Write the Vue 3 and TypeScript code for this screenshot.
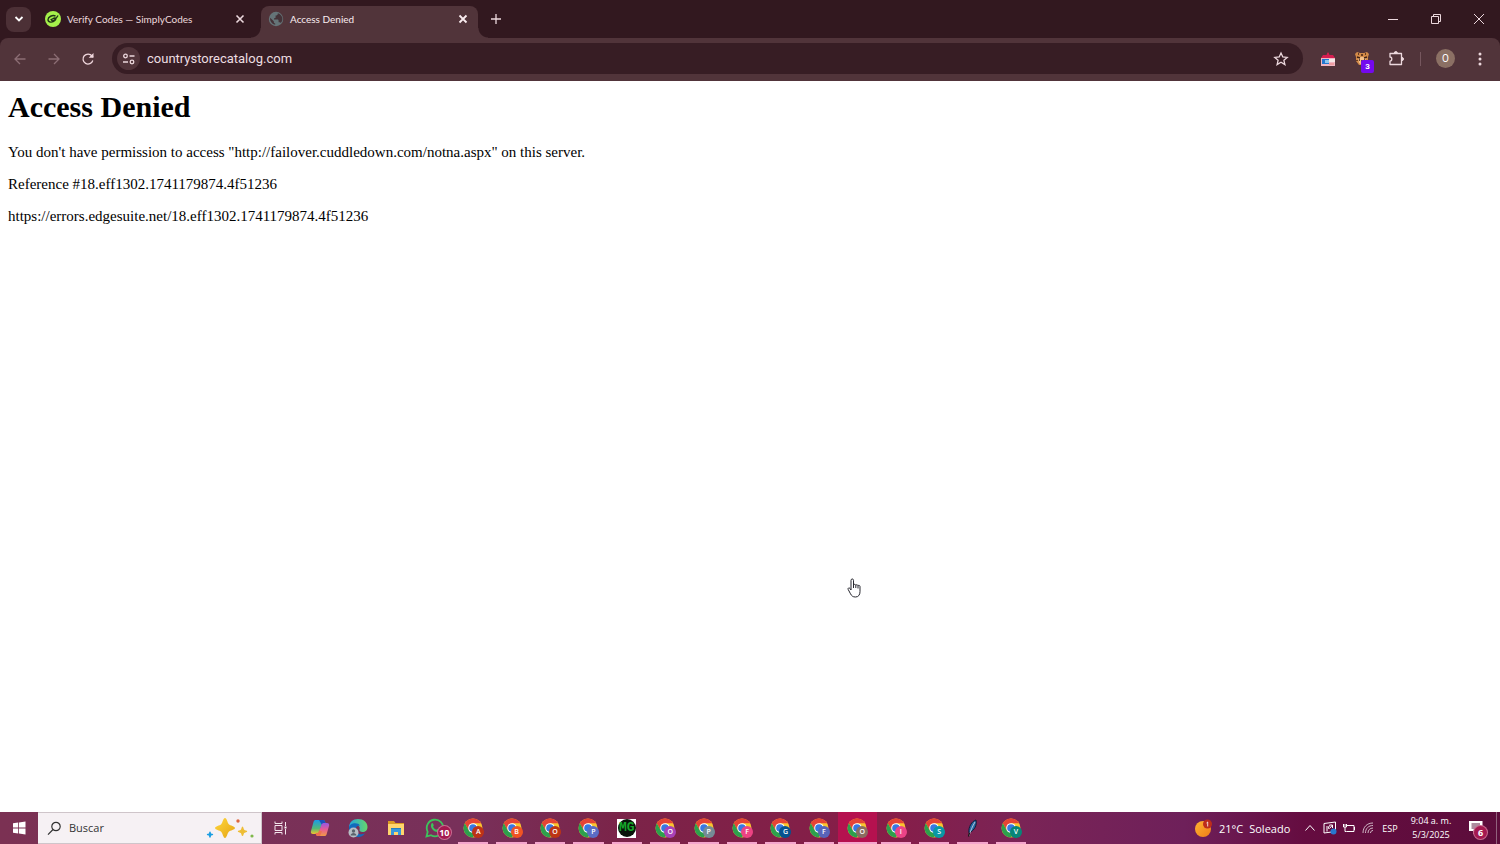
<script setup lang="ts">
import { ref } from 'vue'

interface TaskApp {
  kind: 'taskview' | 'copilot' | 'edge' | 'files' | 'whatsapp' | 'chrome' | 'mg' | 'feather'
  name: string
  letter?: string
  color?: string
  running?: boolean
  active?: boolean
}

const chrome = (letter: string, color: string, active = false): TaskApp => ({
  kind: 'chrome', name: `Google Chrome (${letter})`, letter, color, running: true, active,
})

const apps: TaskApp[] = [
  { kind: 'taskview', name: 'Vista de tareas' },
  { kind: 'copilot', name: 'Copilot' },
  { kind: 'edge', name: 'Microsoft Edge' },
  { kind: 'files', name: 'Explorador de archivos' },
  { kind: 'whatsapp', name: 'WhatsApp' },
  chrome('A', '#bd3217'),
  chrome('B', '#f05423'),
  chrome('O', '#bd3514'),
  chrome('P', '#5a6cc4'),
  { kind: 'mg', name: 'MG', running: true },
  chrome('O', '#a841b8'),
  chrome('P', '#758b96'),
  chrome('F', '#ed4383'),
  chrome('G', '#05528f'),
  chrome('F', '#5864b8'),
  chrome('O', '#8a6c60', true),
  chrome('I', '#ec4388'),
  chrome('S', '#0998a5'),
  { kind: 'feather', name: 'Pluma', running: true },
  chrome('V', '#078578'),
]

const address = ref('countrystorecatalog.com')
const query = ref('')
</script>

<template>
  <div class="screen">
    <header class="browser">
      <div class="strip">
        <button class="tab-search" aria-label="Buscar pestañas">
          <svg width="10" height="8" viewBox="0 0 10 8"><path d="M1.5 2 5 5.5 8.5 2" class="line bold" /></svg>
        </button>
        <div class="tab">
          <svg width="16" height="16" viewBox="0 0 16 16">
            <circle cx="8" cy="8" r="8" fill="#a5f04b" />
            <path d="M10.5 5C7.500 3.600 3 5.800 3 8.800c0 2.600 4.600 3.200 6.800.8 1.200-1.300 1.400-2.600.2-2.600S7.500 8 6.200 8.600l1 1.300c2 0 4.200-2.700 5.800-5.400" fill="none" stroke="#203317" stroke-width="1.400" />
          </svg>
          <span class="title">Verify Codes — SimplyCodes</span>
          <button class="close" aria-label="Cerrar pestaña">
            <svg width="10" height="10" viewBox="0 0 10 10"><path d="m1.500 1.500 7 7m0-7-7 7" class="line" /></svg>
          </button>
        </div>
        <div class="tab current">
          <svg width="16" height="16" viewBox="0 0 16 16">
            <circle cx="8" cy="8" r="7.200" fill="#657478" />
            <path d="M9.800 2.200C10 3.800 9 4.600 7.600 4.600v1.600c0 .8-.6 1-1.600 1v1.300h3.400c.8 0 1.200.5 1.200 1.300v1.500h1c.6 0 1 .3 1.200.8A6 6 0 0 0 9.800 2.200zM2.200 6.800a6 6 0 0 0 5 7v-1.400c-.8 0-1.400-.6-1.400-1.400v-.8z" fill="#443238" />
          </svg>
          <span class="title">Access Denied</span>
          <button class="close" aria-label="Cerrar pestaña">
            <svg width="10" height="10" viewBox="0 0 10 10"><path d="m1.500 1.500 7 7m0-7-7 7" class="line bold" /></svg>
          </button>
        </div>
        <button class="new-tab" aria-label="Nueva pestaña">
          <svg width="12" height="12" viewBox="0 0 12 12"><path d="M6 1v10M1 6h10" class="line small" /></svg>
        </button>
        <div class="window-buttons">
          <button aria-label="Minimizar"><svg width="12" height="12" viewBox="0 0 12 12"><path d="M1 6.500h10" class="line thin" /></svg></button>
          <button aria-label="Restaurar"><svg width="12" height="12" viewBox="0 0 12 12"><path d="M1.500 3.500h7v7h-7zM3.500 3.500v-2h7v7h-2" class="line thin" /></svg></button>
          <button aria-label="Cerrar"><svg width="12" height="12" viewBox="0 0 12 12"><path d="m1 1 10 10M11 1 1 11" class="line thin" /></svg></button>
        </div>
      </div>

      <div class="toolbar">
        <button class="nav dim" aria-label="Atrás"><svg width="14" height="14" viewBox="0 0 14 14"><path d="M12.500 7H2M7 2 2 7l5 5" class="line small" /></svg></button>
        <button class="nav dim" aria-label="Adelante"><svg width="14" height="14" viewBox="0 0 14 14"><path d="M1.500 7H12M7 2l5 5-5 5" class="line small" /></svg></button>
        <button class="nav" aria-label="Volver a cargar">
          <svg width="14" height="14" viewBox="0 0 14 14"><path d="M11.800 8.500A5 5 0 1 1 11 4l1 1.200" class="line small" /><path d="M12.500 1v4.800H7.700z" fill="currentColor" /></svg>
        </button>
        <div class="omnibox">
          <button class="site" aria-label="Información del sitio">
            <svg width="14" height="12" viewBox="0 0 14 12"><circle cx="3.500" cy="3" r="1.800" class="line small" /><path d="M7.500 3h5M1 9h5" class="line small" /><circle cx="10" cy="9" r="1.800" class="line small" /></svg>
          </button>
          <input v-model="address" class="url" type="text" aria-label="Dirección" spellcheck="false" />
          <button class="star" aria-label="Agregar a favoritos">
            <svg width="16" height="16" viewBox="0 0 16 16"><path d="m8 2 1.800 4 4.400.4-3.300 2.900 1 4.300L8 11.300l-3.900 2.300 1-4.300-3.300-2.900L6.200 6z" class="line small" /></svg>
          </button>
        </div>
        <button class="ext" aria-label="Extensión de tienda">
          <svg width="16" height="16" viewBox="0 0 16 16">
            <path d="M1 7 3 4h3.500l1-2.500h1l1 2.500H13l2 3z" fill="#d51e50" />
            <path d="M1 7h14v8H1z" fill="#f1b6c2" /><path d="M2 8h7v5H2z" fill="#2477cf" /><path d="M5 9h4v3H5z" fill="#8cc6ee" /><path d="M9 8h6v3H9z" fill="#f4e9e6" /><path d="M9 12h5v2H9z" fill="#ed9da1" />
          </svg>
        </button>
        <button class="ext" aria-label="Extensión con 3 avisos">
          <svg width="16" height="16" viewBox="0 0 16 16">
            <path d="M1 3 3 1l3 1h4l3-1 2 2-1 3v4l-3 4H5l-3-4V6z" fill="#d28a48" />
            <path d="M4 6h8l-1 6-3 2-3-2z" fill="#f4c18b" />
            <path d="M4 3h1m2 1h2m2-1h1M3 6l3 1m4 0 3-1M5 9h1m4 0h1M7 10h2M3 9v1" stroke="#402014" stroke-width="1.400" />
          </svg>
          <span class="count">3</span>
        </button>
        <button class="ext" aria-label="Extensiones">
          <svg width="18" height="18" viewBox="0 0 18 18"><path d="M3 3.500h11.500v11H3v-3.300c2.400 0 2.400-4.200 0-4.200z" class="line small" stroke-linejoin="round" /><path d="M7.300 3a1.500 1.500 0 0 1 3 0zM15 7.500a1.500 1.500 0 0 1 0 3z" fill="currentColor" stroke="currentColor" /></svg>
        </button>
        <span class="divider"></span>
        <button class="profile" aria-label="Perfil">O</button>
        <button class="menu" aria-label="Menú">
          <svg width="4" height="14" viewBox="0 0 4 14"><circle cx="2" cy="2" r="1.500" /><circle cx="2" cy="7" r="1.500" /><circle cx="2" cy="12" r="1.500" /></svg>
        </button>
      </div>
    </header>

    <main class="page">
      <h1>Access Denied</h1>
      <p>You don't have permission to access "http://failover.cuddledown.com/notna.aspx" on this server.</p>
      <p>Reference #18.eff1302.1741179874.4f51236</p>
      <p>https://errors.edgesuite.net/18.eff1302.1741179874.4f51236</p>
    </main>

    <svg class="pointer" width="14" height="20" viewBox="0 0 14 20">
      <path d="M4 12V2.300C4 .5 6.500.5 6.500 2.300V7c0-1 2.200-1 2.300.4 0-1 2.200-.9 2.200.5.200-.9 2-.7 2 .6v5.200c0 3-1.500 5.300-4.500 5.300-2.800 0-3.900-1.200-5-3.200L1.200 11.500C.5 10 2.200 9.300 3 10.500zM6.500 7v3M8.800 7.400V10M11 8v2.500" fill="#fff" stroke="#26262e" stroke-width="1" stroke-linejoin="round" />
    </svg>

    <footer class="taskbar">
      <button class="start" aria-label="Inicio">
        <svg width="14" height="14" viewBox="0 0 14 14"><path d="m1 2.300 5.200-.7v5H1zM7 1.500 13.500.6v6H7zM1 7.400h5.200v5L1 11.700zM7 7.400h6.500v6L7 12.500z" fill="#fff" /></svg>
      </button>
      <label class="search">
        <svg width="15" height="15" viewBox="0 0 15 15"><circle cx="9" cy="5.500" r="4.200" fill="none" stroke="#333" stroke-width="1.200" /><path d="M6 8.500 1 13.700" stroke="#333" stroke-width="1.200" /></svg>
        <input v-model="query" type="text" placeholder="Buscar" aria-label="Buscar" />
        <svg width="50" height="24" viewBox="0 0 50 24">
          <defs><linearGradient id="gold" x1="0" y1="0" x2="1" y2="1"><stop offset="0" stop-color="#ffd83e" /><stop offset="1" stop-color="#e5a313" /></linearGradient></defs>
          <path d="M20 2c1.800 0 2.400 4.800 3.800 6.200s6.200 2 6.200 3.800-4.800 2.400-6.200 3.800S21.800 22 20 22s-2.400-4.800-3.800-6.200S10 13.800 10 12s4.800-2.400 6.200-3.800S18.200 2 20 2z" fill="url(#gold)" />
          <path d="M37.500 10.500c1 0 1 2.600 1.700 3.300s3 .7 3 1.600-2.300.9-3 1.600-.7 3-1.700 3-1-2.300-1.700-3-3-.7-3-1.600 2.300-.9 3-1.600.7-3.300 1.700-3.300z" fill="#eebd35" />
          <path d="M5 15.500c1 0 .7 1.600 1.200 2s2 .2 2 1.100-1.500.6-2 1.100-.2 2-1.200 2-.7-1.500-1.200-2-2-.2-2-1.100 1.500-.6 2-1.100.2-2 1.200-2z" fill="#1b9ee2" />
          <circle cx="33" cy="5" r="1.700" fill="#df663d" /><circle cx="47" cy="20" r="1.600" fill="#7fb84b" />
        </svg>
      </label>

      <nav class="apps" aria-label="Aplicaciones">
        <button v-for="(app, i) in apps" :key="i" :aria-label="app.name" :class="{ running: app.running, active: app.active }">
          <svg v-if="app.kind === 'taskview'" width="16" height="14" viewBox="0 0 16 14"><path d="M2 .5v2h7v-2M2 13.500v-2h7v2M2 4.500h7v5H2zM12.500 1v4M12.500 8v5.500" fill="none" stroke="#f3e5ec" /><path d="M11.500 5.500h2v2h-2z" fill="#fff" /></svg>
          <svg v-else-if="app.kind === 'copilot'" width="20" height="18" viewBox="0 0 20 18">
            <defs>
              <linearGradient id="cpa" x1="0" y1="0" x2="0" y2="1"><stop offset="0" stop-color="#199be8" /><stop offset=".6" stop-color="#52b879" /><stop offset="1" stop-color="#f0c52c" /></linearGradient>
              <linearGradient id="cpb" x1="0" y1="0" x2="0" y2="1"><stop offset="0" stop-color="#9457e5" /><stop offset=".5" stop-color="#e85c94" /><stop offset="1" stop-color="#f29a44" /></linearGradient>
            </defs>
            <path d="M6 1h7c2 0 2 2 2.500 3L12 5 9 13c-.6 1.500-1.500 2-3 2H3c-2 0-2.500-1.500-2-3L3.500 3C4 1.500 4.500 1 6 1z" fill="url(#cpa)" />
            <path d="M9 1h4c1.500 0 2 1.500 2.400 3L12 6z" fill="#1c50be" />
            <path d="M14.500 17H8c-2 0-2-1.500-2.500-3h3l3-8.500C12 4.500 13 4 14 4h3c2 0 2.500 1.500 2 3l-2.300 8c-.4 1.500-1 2-2.200 2z" fill="url(#cpb)" />
            <path d="m9 12 3 .3-2 4.700H8c-1.800 0-2-1.500-2.500-3H8z" fill="#ef704d" />
          </svg>
          <svg v-else-if="app.kind === 'edge'" width="20" height="20" viewBox="0 0 20 20">
            <defs><linearGradient id="edgeg"><stop offset="0" stop-color="#22a6dc" /><stop offset="1" stop-color="#67d66b" /></linearGradient></defs>
            <path d="M1 10C1 4 5 1 10 1c5.500 0 9.500 3.500 9.500 8 0 3-2 5-5 5-2 0-3.500-1-3-2.500.9-2-.5-4.500-3.500-4.500-4 0-7 1.500-7 3z" fill="url(#edgeg)" />
            <path d="M1 10c0-3 3-4.700 6.200-4.700 2.300 0 4 .8 4.700 2.200C8 7.500 7 11 8.300 13.500c1.400 2.800 5 3.600 8.700 2C15 18 13 19 10 19c-5 0-9-4-9-9z" fill="#126abc" />
            <circle cx="5.500" cy="14.500" r="5" fill="#b6bdc4" /><circle cx="5.500" cy="13" r="1.700" fill="#5b626c" /><path d="M2.500 17.500c.2-3.500 5.800-3.500 6 0" fill="#5b626c" />
          </svg>
          <svg v-else-if="app.kind === 'files'" width="18" height="16" viewBox="0 0 18 16"><path d="M1 1h6l1.500 2H17v12H1z" fill="#dc9c23" /><path d="M1 4h16v11H1z" fill="#ffd66d" /><path d="M4 9h10v6h-3v-3H7v3H4z" fill="#3699dc" /><path d="M4 8h10v1H4z" fill="#267fbc" /></svg>
          <template v-else-if="app.kind === 'whatsapp'">
            <svg width="20" height="20" viewBox="0 0 20 20"><path d="m1.500 18.500 1.200-4.700A8.300 8.300 0 1 1 6 17.200z" fill="none" stroke="#3cc45c" stroke-width="1.800" /><path d="M6.500 5.500c1-1 1.500-.3 2.200 1.500.3.900-.8 1.300-.5 1.900.7 1.300 1.700 2.200 3 2.800.6.300 1.100-1.200 1.800-.9 2.100.9 2 1.200 1.500 2.200-3 3.500-11-3-8-7.500z" fill="#3cc45c" /></svg>
            <span class="notice far">10</span>
          </template>
          <template v-else-if="app.kind === 'chrome'">
            <svg width="20" height="20" viewBox="0 0 20 20">
              <circle cx="10" cy="10" r="9.500" fill="#f9c52f" />
              <path d="M1.800 5.200A9.500 9.500 0 0 1 18.200 5.200H10L5.800 12.400z" fill="#e54335" />
              <path d="M1.800 5.200 5.800 12.400 10 14.800h4L9.500 19.500A9.500 9.500 0 0 1 1.800 5.200z" fill="#2da04d" />
              <circle cx="10" cy="10" r="4.800" fill="#fff" /><circle cx="10" cy="10" r="3.800" fill="#3778e2" />
            </svg>
            <span class="letter" :style="{ background: app.color }">{{ app.letter }}</span>
          </template>
          <span v-else-if="app.kind === 'mg'" class="mg"><span>MG</span></span>
          <svg v-else width="12" height="18" viewBox="0 0 12 18"><path d="M2 14C1 8 5 2 9 1c1 5-1 10-7 13z" fill="#2869a5" stroke="#101a38" /><path d="M8 3C5.500 7 3.500 12 2 17" fill="none" stroke="#d3ddea" stroke-width=".8" /><path d="m2.500 14-1 3.500" stroke="#111" stroke-width="1.200" /></svg>
        </button>
      </nav>

      <div class="tray">
        <button class="weather">
          <svg width="18" height="18" viewBox="0 0 18 18"><defs><linearGradient id="sun" x1="0" y1="0" x2="1" y2="1"><stop offset="0" stop-color="#ffb331" /><stop offset="1" stop-color="#ef7d18" /></linearGradient></defs><circle cx="8" cy="10" r="8" fill="url(#sun)" /><circle cx="12.500" cy="5" r="4.500" fill="#bd2c1c" /><path d="m11.500 4 1.200-1v4.500" fill="none" stroke="#fff" stroke-width=".8" /></svg>
          <span>21°C</span><span>Soleado</span>
        </button>
        <button aria-label="Mostrar iconos ocultos"><svg width="12" height="12" viewBox="0 0 12 12"><path d="m1.500 8.500 4.500-5 4.500 5" class="line thin" /></svg></button>
        <button aria-label="Sincronización"><svg width="14" height="14" viewBox="0 0 14 14"><path d="M1 2.500 12.500 1v9.500L1 12zM4 5v5.500M7 4.500c-1.500.5-2 2.500-1 3.500M6.500 4h3v3M9.500 4 6.500 7.500" class="line thin" /><circle cx="10.500" cy="10.500" r="3" fill="#2877cf" /></svg></button>
        <button aria-label="Batería"><svg width="14" height="12" viewBox="0 0 14 12"><path d="M4.500 3.500h7.500v6H4.500M12.500 5v3M1.500 2v3h3V2M1 3h4M3 5v4.500h1.500" class="line thin" /></svg></button>
        <button aria-label="Red"><svg width="12" height="12" viewBox="0 0 12 12" opacity=".7"><path d="M1 11C1 5 5 1 11 1M3.500 11C3.500 6.500 6.500 3.500 11 3.500M6 11c0-3 2-5 5-5M8.500 11c0-1.500 1-2.500 2.500-2.500" class="line thin" /></svg></button>
        <button class="lang">ESP</button>
        <button class="clock"><span>9:04 a. m.</span><span>5/3/2025</span></button>
        <button class="center" aria-label="6 notificaciones">
          <svg width="14" height="14" viewBox="0 0 14 14"><path d="M0 0h13.500v10H7l-3 3v-3H0z" fill="#fff" /><path d="M2.500 3h8.500M2.500 5h8.500M2.500 7h5" stroke="#5d183f" /></svg>
          <span class="notice">6</span>
        </button>
        <span class="peek"></span>
      </div>
    </footer>
  </div>
</template>

<style>
html, body { margin: 0; background: #fff; }
</style>

<style scoped>
.screen { min-height: 100vh; display: flex; flex-direction: column; position: relative; font-family: "Open Sans", "Noto Sans", sans-serif; }
button, input { font: inherit; color: inherit; background: none; border: 0; padding: 0; margin: 0; outline: none; }
button { display: flex; align-items: center; justify-content: center; position: relative; flex-shrink: 0; }
svg { display: block; flex-shrink: 0; }
.line { fill: none; stroke: currentColor; stroke-width: 1.6; }
.line.bold { stroke-width: 1.8; }
.line.small { stroke-width: 1.3; }
.line.thin { stroke-width: 1; }

.browser { background: #32181f; color: #ecd8dd; font-family: Roboto, "Open Sans", sans-serif; }
.strip { height: 38px; display: flex; align-items: center; padding-left: 6px; }
.tab-search { width: 25px; height: 25px; border-radius: 8px; background: #4c3036; color: #fff; }
.tab { width: 217px; height: 32px; margin-top: 6px; box-sizing: border-box; display: flex; align-items: center; gap: 6px; padding: 0 8px 6px 7px; font-family: Lato, "Open Sans", sans-serif; font-size: 10px; line-height: 16px; position: relative; }
.tab:not(.current) { margin: 6px 6px 0 7px; }
.tab.current { background: #51343a; border-radius: 8px 8px 0 0; color: #faedf0; }
.tab.current::before, .tab.current::after { content: ""; position: absolute; bottom: 0; width: 10px; height: 10px; }
.tab.current::before { left: -10px; background: radial-gradient(circle at 0 0, transparent 9px, #51343a 10px); }
.tab.current::after { right: -10px; background: radial-gradient(circle at 100% 0, transparent 9px, #51343a 10px); }
.title { flex: 1; white-space: nowrap; }
.close { width: 14px; height: 14px; }
.new-tab { width: 24px; height: 24px; margin-left: 6px; }
.window-buttons { margin-left: auto; display: flex; }
.window-buttons button { width: 43px; height: 36px; }

.toolbar { height: 43px; box-sizing: border-box; display: flex; align-items: center; padding: 0 10px 2px 3px; background: #51343a; border-radius: 8px 8px 0 0; }
.nav { width: 34px; height: 32px; color: #f1d8de; }
.nav.dim { color: #8c6d74; }
.omnibox { flex: 1; height: 31px; margin-left: 7px; border-radius: 16px; background: #371d24; display: flex; align-items: center; padding: 0 14px 0 5px; }
.site { width: 23px; height: 23px; border-radius: 50%; background: #51343a; }
.url { flex: 1; min-width: 0; margin-left: 7px; font-size: 13px; line-height: 20px; color: #eddde1; }
.ext { width: 34px; height: 32px; }
.omnibox + .ext { margin-left: 8px; }
.count { position: absolute; left: 16px; top: 17px; width: 13px; height: 13px; border-radius: 2px; background: #7409ee; color: #fff; font-size: 8px; font-weight: 700; line-height: 13px; text-align: center; }
.divider { width: 1px; height: 14px; margin: 0 15px 0 7px; background: #76575e; }
.profile { width: 19px; height: 19px; border-radius: 50%; background: #8b7064; color: #fff; font-size: 10px; }
.menu { width: 20px; height: 24px; margin-left: 15px; fill: currentColor; }

.page { flex: 1; padding: 9px 8px 8px; font-family: "Liberation Serif", "Times New Roman", serif; font-size: 15px; line-height: 17px; color: #000; }
.page h1 { margin: 0 0 20px; font-size: 30px; line-height: 34px; }
.page p { margin: 0 0 15px; }
.pointer { position: absolute; left: 847px; top: 578px; }

.taskbar { height: 32px; display: flex; color: #fff; font-size: 11px; background: linear-gradient(90deg, #7b3153 0, #78305a 31%, #7b2348 42%, #871d48 59%, #7a2456 68%, #6e205a 79%, #650c40 87%, #5c0d3b 100%); }
.start { width: 38px; }
.search { width: 224px; box-sizing: border-box; display: flex; align-items: center; padding: 0 6px 0 9px; background: #f6f1f4; border: 1px solid #cfc5ca; border-left: 0; color: #333; }
.search input { flex: 1; min-width: 0; margin-left: 7px; line-height: 16px; }
.search input::placeholder { color: #333; opacity: 1; }
.apps { display: flex; flex: 0 1 768px; }
.apps button { flex: 1; }
.apps .active { background: #b5114f; }
.running::after { content: ""; position: absolute; left: 4px; right: 4px; bottom: 0; height: 2px; background: #f4a6cd; }
.active::after { left: 0; right: 0; }
.letter { position: absolute; left: 50%; top: 50%; width: 12px; height: 12px; border-radius: 50%; margin: -2px 0 0 -1px; color: #fff; font-size: 7px; font-weight: 600; line-height: 12px; text-align: center; }
.notice { position: absolute; left: 50%; top: 50%; width: 13px; height: 13px; margin: -2px 0 0 -2px; border-radius: 50%; background: #a41950; box-shadow: 0 0 0 1px #c96b91; font-size: 9px; font-weight: 700; line-height: 13px; text-align: center; }
.notice.far { margin-left: 3px; }
.mg { width: 19px; height: 19px; display: grid; place-items: center; background: #fff; }
.mg span { width: 18px; height: 18px; border-radius: 50%; background: #08140a; color: #16a52b; font: 700 13px/18px "Liberation Mono", monospace; text-align: center; }
.tray { margin-left: auto; display: flex; }
.tray button { width: 19px; }
.tray .weather { width: 110px; gap: 6px; justify-content: flex-start; padding-left: 5px; }
.tray .weather + button { width: 20px; }
.tray .lang { width: 26px; font-size: 9px; }
.tray .clock { width: 56px; flex-direction: column; font-size: 9px; line-height: 14px; }
.tray .center { width: 34px; }
.peek { width: 3px; margin-left: 3px; border-left: 1px solid #91617c; }
</style>
